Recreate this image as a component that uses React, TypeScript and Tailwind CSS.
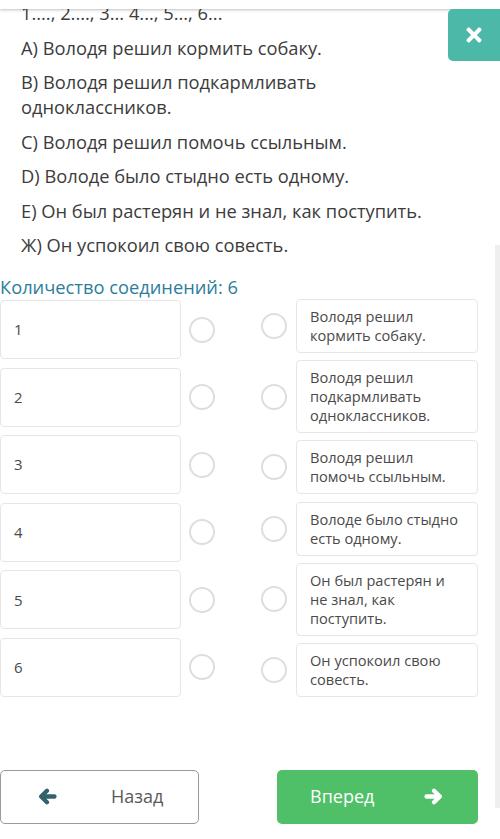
import { FaTimes } from "react-icons/fa";

const statements = [
  "А) Володя решил кормить собаку.",
  "В) Володя решил подкармливать одноклассников.",
  "С) Володя решил помочь ссыльным.",
  "D) Володе было стыдно есть одному.",
  "Е) Он был растерян и не знал, как поступить.",
  "Ж) Он успокоил свою совесть.",
];

const answers = [
  "Володя решил кормить собаку.",
  "Володя решил подкармливать одноклассников.",
  "Володя решил помочь ссыльным.",
  "Володе было стыдно есть одному.",
  "Он был растерян и не знал, как поступить.",
  "Он успокоил свою совесть.",
];

function Circle() {
  return <div className="h-[26px] w-[26px] shrink-0 rounded-full border-2 border-[#dedede] bg-white" />;
}

// chunky arrow, like the old font-awesome one
function Arrow({ dir, className }: { dir: "left" | "right"; className?: string }) {
  return (
    <svg
      viewBox="0 0 18 16"
      className={className}
      fill="none"
      stroke="currentColor"
      strokeLinecap="round"
      strokeLinejoin="round"
      style={dir === "right" ? { transform: "scaleX(-1)" } : undefined}
    >
      <path d="M8.5 2.5 L3 8 L8.5 13.5" strokeWidth="4" />
      <path d="M4 8 H15.5" strokeWidth="4.2" />
    </svg>
  );
}

export default function App() {
  return (
    <div
      className="relative h-[839px] w-[500px] overflow-hidden bg-white text-[#3c3c3c]"
      style={{ fontFamily: '"Open Sans", "Noto Sans", sans-serif' }}
    >
      {/* top bar */}
      <div className="absolute left-0 right-0 top-0 z-10 h-[9px] bg-white shadow-[0_1px_3px_rgba(0,0,0,0.25)]" />
      <button
        type="button"
        className="absolute right-[-6px] top-[9px] z-10 flex h-[52px] w-[58px] items-center justify-center rounded-[5px] bg-[#4cb8a8] pr-[6px] text-white"
      >
        <FaTimes className="h-[22px] w-[22px]" />
      </button>

      {/* statements */}
      <div className="w-[430px] pl-[21px] text-[18.3px] leading-[25px]">
        <p className="mb-[9.5px]">1...., 2...., 3... 4..., 5..., 6...</p>
        {statements.map((s) => (
          <p key={s} className="mb-[9.5px]">
            {s}
          </p>
        ))}
      </div>

      <div className="mt-[17px] text-[18.3px] leading-[25px] text-[#2b7d9b]">
        Количество соединений: 6
      </div>

      {/* matching grid */}
      <div className="flex w-[478px] items-stretch">
        <div className="flex flex-col gap-[8.6px] pt-[1px]">
          {answers.map((_, i) => (
            <div key={i} className="flex items-center">
              <div className="flex h-[59px] w-[181px] items-center rounded-[4px] border border-[#e6e6e6] pl-[13px] text-[15px] text-[#4a4a4a]">
                {i + 1}
              </div>
              <div className="ml-[8px]">
                <Circle />
              </div>
            </div>
          ))}
        </div>
        <div className="ml-[46px] flex flex-1 flex-col justify-between">
          {answers.map((a, i) => (
            <div key={i} className="flex items-center">
              <Circle />
              <div className="ml-[9px] flex-1 rounded-[4px] border border-[#e6e6e6] px-[13px] py-[7px] text-[14.6px] leading-[19px] text-[#4a4a4a]">
                {a}
              </div>
            </div>
          ))}
        </div>
      </div>

      {/* buttons */}
      <div className="mt-[73px] flex w-[478px] justify-between">
        <button
          type="button"
          className="flex h-[54px] w-[199px] items-center rounded-[5px] border border-[#9a9a9a] bg-white text-[18px] text-[#5a5a5a]"
        >
          <Arrow dir="left" className="ml-[37px] h-[17px] w-[19px] text-[#30636b]" />
          <span className="ml-[54px]">Назад</span>
        </button>
        <button
          type="button"
          className="flex h-[54px] w-[201px] items-center rounded-[5px] bg-[#50c068] text-[18px] text-white"
        >
          <span className="ml-[33px]">Вперед</span>
          <Arrow dir="right" className="ml-auto mr-[35px] h-[17px] w-[19px]" />
        </button>
      </div>

      {/* scrollbar */}
      <div className="absolute right-0 top-[245px] h-[563px] w-[5px] bg-[#efefef]" />
    </div>
  );
}
